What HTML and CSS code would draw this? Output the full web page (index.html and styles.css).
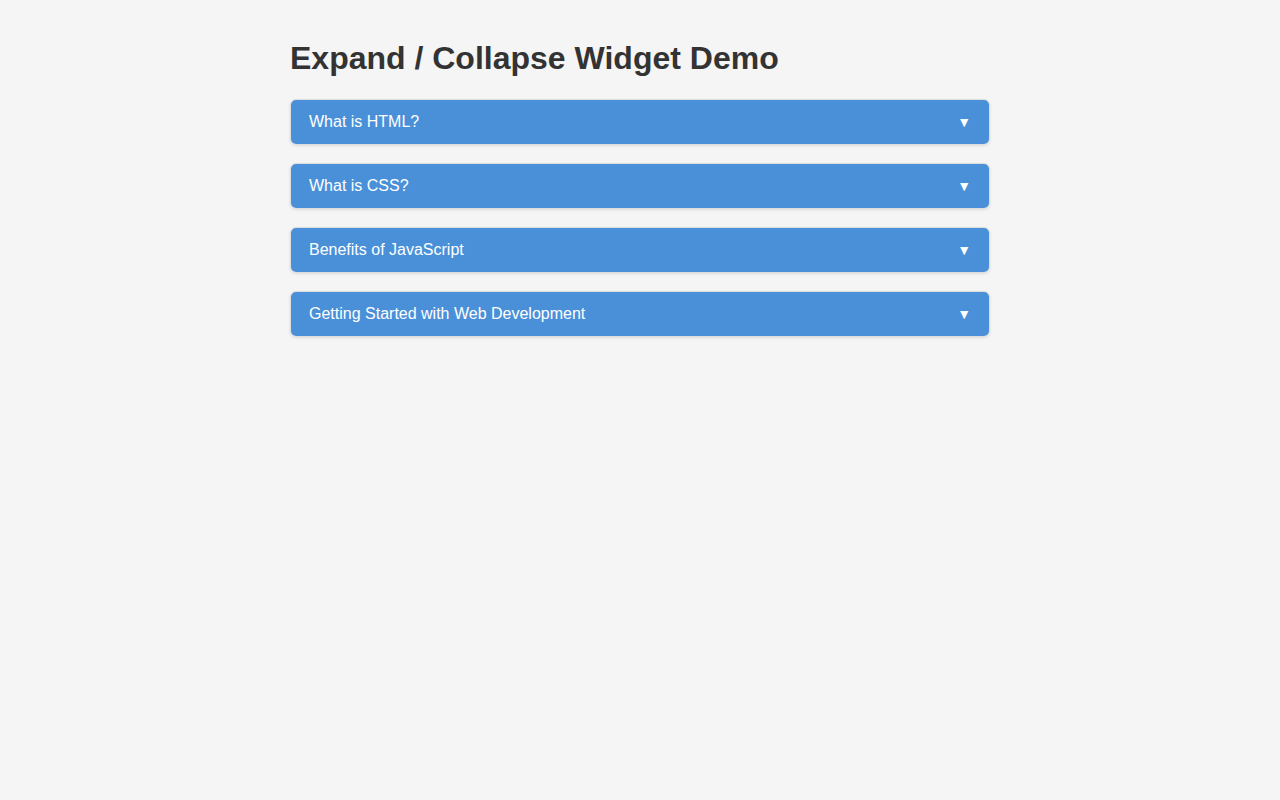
FILE: index.html
```html
<!DOCTYPE html>
<html lang="en">
<head>
    <meta charset="UTF-8">
    <meta name="viewport" content="width=device-width, initial-scale=1.0">
    <title>Expand / Collapse Widget Demo</title>
    <link rel="stylesheet" href="styles.css">
</head>
<body>
    <div class="container">
        <h1>Expand / Collapse Widget Demo</h1>

        <div class="collapsible">
            <button class="collapsible-header">
                <span>What is HTML?</span>
                <span class="arrow">▼</span>
            </button>
        </div>

        <div class="collapsible">
            <button class="collapsible-header">
                <span>What is CSS?</span>
                <span class="arrow">▼</span>
            </button>
        </div>

        <div class="collapsible">
            <button class="collapsible-header">
                <span>Benefits of JavaScript</span>
                <span class="arrow">▼</span>
            </button>
        </div>

        <div class="collapsible">
            <button class="collapsible-header">
                <span>Getting Started with Web Development</span>
                <span class="arrow">▼</span>
            </button>
        </div>
    </div>
</body>
</html>
```

FILE: styles.css
```css
* {
    box-sizing: border-box;
}

body {
    margin: 0;
    font-family: "Liberation Sans", Arial, sans-serif;
    background: #f5f5f5;
    color: #333;
}

.container {
    max-width: 700px;
    margin: 0 auto;
    padding-top: 40px;
}

h1 {
    font-size: 32px;
    font-weight: bold;
    margin: 0 0 22px;
    color: #333;
}

.collapsible {
    margin-bottom: 18px;
    border: 1px solid #ddd;
    border-radius: 6px;
    overflow: hidden;
    box-shadow: 0 1px 3px rgba(0,0,0,0.1);
}

.collapsible-header {
    width: 100%;
    display: flex;
    justify-content: space-between;
    align-items: center;
    padding: 13px 18px;
    background: #4a90d9;
    color: white;
    border: none;
    font-family: inherit;
    font-size: 16px;
    line-height: 18px;
    text-align: left;
    cursor: pointer;
}

.arrow {
    font-size: 14px;
}
```
